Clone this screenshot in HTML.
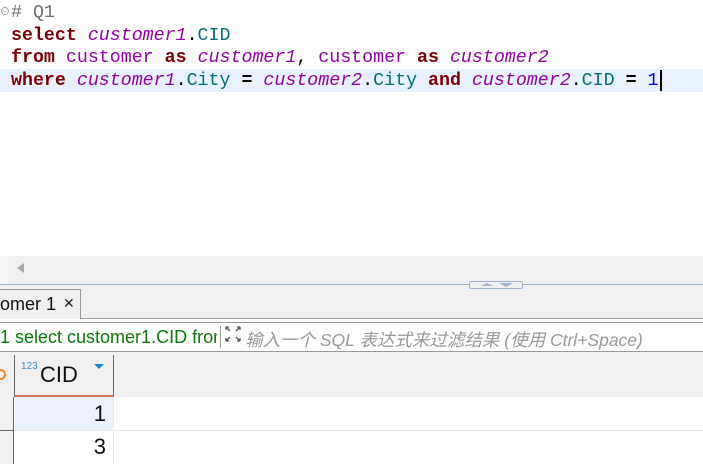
<!DOCTYPE html>
<html><head><meta charset="utf-8"><style>
*{margin:0;padding:0;box-sizing:border-box}
body{width:703px;height:464px;overflow:hidden;background:#fff;position:relative;font-family:"Liberation Sans","Noto Sans CJK SC",sans-serif}
.abs{position:absolute}
.code{font-family:"Liberation Mono",monospace;font-size:18.3px;line-height:23px;white-space:pre;left:11px}
.k{color:#7f0000;font-weight:bold}
.i{color:#9500a8;font-style:italic}
.p{color:#9500a8}
.c{color:#00707a}
.o{color:#000;font-weight:bold}
.n{color:#0000ff}
</style></head><body>
<div class="abs" style="left:0;top:69px;width:703px;height:23px;background:#e8f2fe"></div>
<div class="abs" style="left:0;top:3px;font-size:10px;color:#888">⊖</div>
<div class="abs code" style="top:2px;color:#707070"># Q1</div>
<div class="abs code" style="top:25px"><span class="k">select</span> <span class="i">customer1</span>.<span class="c">CID</span></div>
<div class="abs code" style="top:47px"><span class="k">from</span> <span class="p">customer</span> <span class="k">as</span> <span class="i">customer1</span>, <span class="p">customer</span> <span class="k">as</span> <span class="i">customer2</span></div>
<div class="abs code" style="top:70px"><span class="k">where</span> <span class="i">customer1</span>.<span class="c">City</span> <span class="o">=</span> <span class="i">customer2</span>.<span class="c">City</span> <span class="k">and</span> <span class="i">customer2</span>.<span class="c">CID</span> <span class="o">=</span> <span class="n">1</span></div>
<div class="abs" style="left:660px;top:70px;width:2px;height:21px;background:#000"></div>
<!-- scrollbar -->
<div class="abs" style="left:0;top:256px;width:703px;height:29px;background:#f0f0f0"></div>
<div class="abs" style="left:0;top:256px;width:8px;height:29px;background:#f7f7f7"></div>
<div class="abs" style="left:17px;top:263px;width:0;height:0;border-top:5px solid transparent;border-bottom:5px solid transparent;border-right:7px solid #aaa"></div>
<!-- tab area -->
<div class="abs" style="left:0;top:285px;width:703px;height:33px;background:#f0f0f0"></div>
<div class="abs" style="left:0;top:284px;width:703px;height:1px;background:#9fb4cc"></div>
<div class="abs" style="left:469px;top:281px;width:54px;height:8px;border:1px solid #9fb4cc;background:#f0f0f0;border-radius:2px"></div>
<div class="abs" style="left:481px;top:283px;width:0;height:0;border-left:6px solid transparent;border-right:6px solid transparent;border-bottom:3px solid #9fb4cc"></div>
<div class="abs" style="left:499px;top:283px;width:0;height:0;border-left:7px solid transparent;border-right:7px solid transparent;border-top:4px solid #9fb4cc"></div>
<div class="abs" style="left:0;top:289px;width:81px;height:30px;border-right:1px solid #999;border-top:1px solid #999;background:#f0f0f0"></div>
<div class="abs" style="left:0;top:294px;font-size:18px;color:#111">omer 1</div>
<div class="abs" style="left:63px;top:295px;font-size:14px;color:#222">✕</div>
<div class="abs" style="left:81px;top:318px;width:622px;height:1px;background:#999"></div>
<!-- filter -->
<div class="abs" style="left:0;top:322px;width:703px;height:30px;background:#fff;border-top:1px solid #999;border-bottom:1px solid #999"></div>
<div class="abs" style="left:0;top:327px;font-size:18px;color:#0a7a0a;white-space:nowrap;width:217px;overflow:hidden">1 select customer1.CID from</div>
<div class="abs" style="left:220px;top:326px;width:1px;height:22px;background:#999"></div>
<svg class="abs" style="left:224px;top:325px" width="18" height="18" viewBox="0 0 18 18" fill="none" stroke="#555" stroke-width="1.3"><path d="M2 2l4 4M2 2h3M2 2v3M16 2l-4 4M16 2h-3M16 2v3M2 16l4-4M2 16h3M2 16v-3M16 16l-4-4M16 16h-3M16 16v-3"/></svg>
<div class="abs" style="left:245px;top:327px;font-size:17.5px;color:#9a9a9a;font-style:italic;white-space:nowrap">输入一个 SQL 表达式来过滤结果 (使用 Ctrl+Space)</div>
<!-- grid header -->
<div class="abs" style="left:0;top:352px;width:703px;height:45px;background:#f0f0f0"></div>
<div class="abs" style="left:-5px;top:369px;width:11px;height:11px;border:2px solid #f08c20;border-radius:50%"></div>
<div class="abs" style="left:14px;top:355px;width:100px;height:42px;border-left:1px solid #666;border-right:1px solid #666;border-bottom:2px solid #d4745a"></div>
<div class="abs" style="left:21px;top:361px;font-size:10px;color:#3a8ad0">123</div>
<div class="abs" style="left:40px;top:362px;font-size:22px;color:#111">CID</div>
<div class="abs" style="left:94px;top:364px;border-left:5px solid transparent;border-right:5px solid transparent;border-top:5px solid #1a8ad4"></div>
<!-- rows -->
<div class="abs" style="left:0;top:397px;width:14px;height:67px;background:#f0f0f0;border-right:1px solid #666"></div>
<div class="abs" style="left:0;top:430px;width:14px;height:1px;background:#666"></div>
<div class="abs" style="left:15px;top:397px;width:98px;height:33px;background:#eaf3fc"></div>
<div class="abs" style="left:113px;top:397px;width:1px;height:67px;background:#e8e8e8"></div>
<div class="abs" style="left:15px;top:430px;width:688px;height:1px;background:#e8e8e8"></div>
<div class="abs" style="left:90px;top:401px;font-size:22px;color:#111;width:16px;text-align:right">1</div>
<div class="abs" style="left:90px;top:434px;font-size:22px;color:#111;width:16px;text-align:right">3</div>
</body></html>
